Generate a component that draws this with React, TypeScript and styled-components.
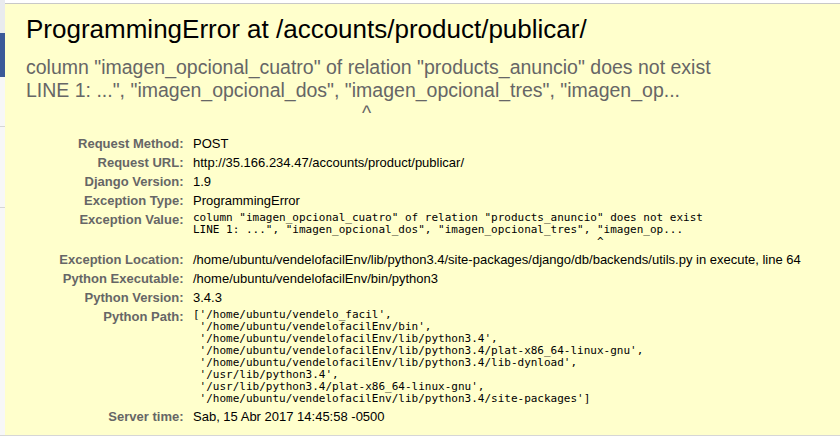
import React from "react";
import styled, { createGlobalStyle } from "styled-components";

const Global = createGlobalStyle`
  html, body { margin: 0; padding: 0; background: #ffffff; }
  body { font-family: "Liberation Sans", Arial, sans-serif; font-size: 13px; }
`;

const Page = styled.div`
  display: flex;
  width: 840px;
  height: 437px;
  overflow: hidden;
  background: #ffffff;
`;

const Side = styled.div`
  width: 5px;
  flex: none;
  display: flex;
  flex-direction: column;
`;

const SideBlock = styled.div<{ $h: number; $bg: string; $line?: boolean }>`
  height: ${(p) => p.$h}px;
  flex: none;
  background: ${(p) => p.$bg};
  border-bottom: ${(p) => (p.$line ? "1px solid #d6d6d6" : "none")};
  box-sizing: border-box;
`;

const Main = styled.div`
  flex: 1;
  padding-top: 3px;
  display: flex;
  flex-direction: column;
`;

const Summary = styled.div`
  background: #ffffcc;
  border-top: 1px solid #c8c8c8;
  border-bottom: 1px solid #d6d6d6;
  padding: 10px 20px 9px 20px;
  height: 433px;
  box-sizing: border-box;
`;

const Title = styled.h1`
  margin: 0;
  font-weight: normal;
  font-size: 26px;
  line-height: 30px;
  color: #000;
  padding-left: 1px;
`;

const ExceptionValue = styled.pre`
  margin: 12px 0 9px 1px;
  font-family: "Liberation Sans", Arial, sans-serif;
  font-size: 19.5px;
  line-height: 23px;
  color: #666;
  white-space: pre;
`;

const Meta = styled.div`
  display: grid;
  grid-template-columns: 165px 1fr;
  font-size: 13px;
  line-height: 15px;
`;

const Label = styled.div`
  text-align: right;
  font-weight: bold;
  color: #666;
  padding: 2px 6.5px 2px 3px;
`;

const Value = styled.div`
  color: #000;
  padding: 2px 3px;
  white-space: nowrap;
`;

const Code = styled.pre`
  margin: 0;
  padding: 2px 3px;
  font-family: "DejaVu Sans Mono", monospace;
  font-size: 11px;
  line-height: 12px;
  color: #000;
  white-space: pre;
`;

const sp = (n: number) => " ".repeat(n);

const pathLines = [
  "['/home/ubuntu/vendelo_facil',",
  " '/home/ubuntu/vendelofacilEnv/bin',",
  " '/home/ubuntu/vendelofacilEnv/lib/python3.4',",
  " '/home/ubuntu/vendelofacilEnv/lib/python3.4/plat-x86_64-linux-gnu',",
  " '/home/ubuntu/vendelofacilEnv/lib/python3.4/lib-dynload',",
  " '/usr/lib/python3.4',",
  " '/usr/lib/python3.4/plat-x86_64-linux-gnu',",
  " '/home/ubuntu/vendelofacilEnv/lib/python3.4/site-packages']",
];

export default function App() {
  return (
    <>
      <Global />
      <Page>
        <Side>
          <SideBlock $h={33} $bg="#e9ebee" />
          <SideBlock $h={44} $bg="#3b5998" />
          <SideBlock $h={50} $bg="#f7f7f7" $line />
          <SideBlock $h={81} $bg="#f7f7f7" $line />
          <SideBlock $h={228} $bg="#f7f7f7" $line />
        </Side>
        <Main>
          <Summary>
            <Title>ProgrammingError at /accounts/product/publicar/</Title>
            <ExceptionValue>
              {'column "imagen_opcional_cuatro" of relation "products_anuncio" does not exist\n'}
              {'LINE 1: ...", "imagen_opcional_dos", "imagen_opcional_tres", "imagen_op...\n'}
              {sp(62) + "^"}
            </ExceptionValue>
            <Meta>
              <Label>Request Method:</Label>
              <Value>POST</Value>
              <Label>Request URL:</Label>
              <Value>http://35.166.234.47/accounts/product/publicar/</Value>
              <Label>Django Version:</Label>
              <Value>1.9</Value>
              <Label>Exception Type:</Label>
              <Value>ProgrammingError</Value>
              <Label>Exception Value:</Label>
              <Code>
                {'column "imagen_opcional_cuatro" of relation "products_anuncio" does not exist\n'}
                {'LINE 1: ...", "imagen_opcional_dos", "imagen_opcional_tres", "imagen_op...\n'}
                {sp(61) + "^"}
              </Code>
              <Label>Exception Location:</Label>
              <Value>
                /home/ubuntu/vendelofacilEnv/lib/python3.4/site-packages/django/db/backends/utils.py in execute, line 64
              </Value>
              <Label>Python Executable:</Label>
              <Value>/home/ubuntu/vendelofacilEnv/bin/python3</Value>
              <Label>Python Version:</Label>
              <Value>3.4.3</Value>
              <Label>Python Path:</Label>
              <Code>{pathLines.join("\n")}</Code>
              <Label>Server time:</Label>
              <Value>Sab, 15 Abr 2017 14:45:58 -0500</Value>
            </Meta>
          </Summary>
        </Main>
      </Page>
    </>
  );
}
